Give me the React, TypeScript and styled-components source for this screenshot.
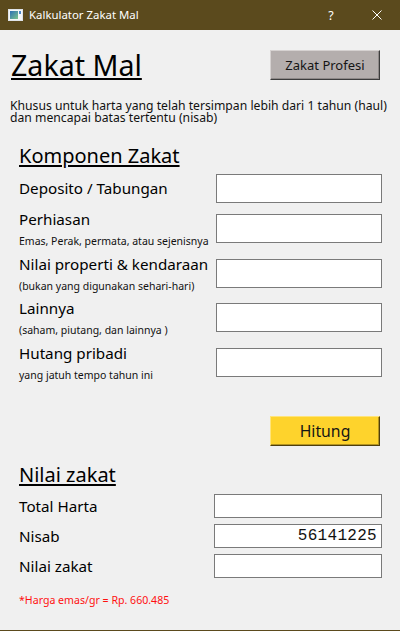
import React from "react";
import styled, { createGlobalStyle } from "styled-components";

const GlobalStyle = createGlobalStyle`
  html, body { margin: 0; padding: 0; background: #f0f0f0; }
  body { font-family: "Noto Sans", "DejaVu Sans", sans-serif; color: #111; }
  * { box-sizing: border-box; }
`;

const Window = styled.div`
  width: 400px;
  height: 631px;
  display: flex;
  flex-direction: column;
  background: #f0f0f0;
  border-bottom: 1px solid #5b4a1d;
`;

const TitleBar = styled.div`
  height: 30px;
  flex: none;
  display: flex;
  align-items: center;
  background: #5b4a1d;
  color: #fff;
  padding-left: 8px;
`;

const TitleText = styled.span`
  font-size: 11.4px;
  margin-left: 6px;
  line-height: 30px;
`;

const CaptionButtons = styled.div`
  margin-left: auto;
  display: flex;
  height: 100%;
`;

const CaptionButton = styled.div`
  width: 46px;
  height: 30px;
  display: flex;
  align-items: center;
  justify-content: center;
  font-size: 12.5px;
  color: #fff;
`;

const Main = styled.div`
  flex: 1;
  display: flex;
  flex-direction: column;
  padding: 0 10px;
`;

const Header = styled.div`
  display: flex;
  justify-content: space-between;
  align-items: flex-start;
  margin-top: 20px;
  padding-right: 10px;
`;

const PageTitle = styled.h1`
  margin: 0 0 0 1px;
  font-weight: normal;
  font-size: 28.6px;
  line-height: 30px;
  text-decoration: underline;
  text-decoration-thickness: 2px;
  text-underline-offset: 2px;
  color: #000;
`;

const Button = styled.button<{ $tone: "gray" | "yellow"; $size: number }>`
  width: 110px;
  height: 30px;
  padding: 0;
  font-family: "Noto Sans", sans-serif;
  font-size: ${(p) => p.$size}px;
  color: #151515;
  cursor: pointer;
  background: ${(p) => (p.$tone === "gray" ? "#b4aead" : "#fed32c")};
  border: 1px solid;
  border-color: ${(p) =>
    p.$tone === "gray"
      ? "#d6d2d1 #3c3c3c #3c3c3c #d6d2d1"
      : "#ffe47a #4e3f0e #4e3f0e #ffe47a"};
  box-shadow: ${(p) =>
    p.$tone === "gray"
      ? "inset -1px -1px 0 #8e8988"
      : "inset -1px -1px 0 #b39420"};
`;

const Intro = styled.p`
  margin: 19.5px 0 0 0;
  font-size: 12.2px;
  line-height: 12.5px;
  color: #111;
`;

const Section = styled.section`
  display: flex;
  flex-direction: column;
  padding: 0 8px 0 9px;
`;

const SectionTitle = styled.h2<{ $top: number }>`
  margin: ${(p) => p.$top}px 0 0 0;
  font-weight: normal;
  font-size: 20px;
  line-height: 24px;
  text-decoration: underline;
  text-underline-offset: 2px;
  color: #000;
`;

const Rows = styled.div<{ $top: number; $gap: number }>`
  display: flex;
  flex-direction: column;
  gap: ${(p) => p.$gap}px;
  margin-top: ${(p) => p.$top}px;
`;

const Row = styled.div<{ $h?: number; $align: "center" | "flex-start" }>`
  display: flex;
  justify-content: space-between;
  align-items: ${(p) => p.$align};
  height: ${(p) => (p.$h ? `${p.$h}px` : "auto")};
`;

const LabelBlock = styled.div`
  display: flex;
  flex-direction: column;
`;

const Label = styled.span`
  font-size: 15.2px;
  color: #000;
`;

const LabelTop = styled(Label)`
  line-height: 10px;
`;

const SubLabel = styled.span`
  margin-top: 11px;
  font-size: 10.5px;
  line-height: 12px;
  color: #111;
`;

const Field = styled.div<{ $w: number; $h: number }>`
  width: ${(p) => p.$w}px;
  height: ${(p) => p.$h}px;
  flex: none;
  background: #fff;
  border: 1px solid #7a7a7a;
  display: flex;
  align-items: center;
  justify-content: flex-end;
  padding-right: 4px;
  font-family: "Liberation Mono", "Courier New", monospace;
  font-size: 16px;
  letter-spacing: 0.3px;
  color: #111;
`;

const ActionRow = styled.div`
  display: flex;
  justify-content: flex-end;
  margin-top: 23px;
  padding-right: 10px;
`;

const Note = styled.p`
  margin: 16px 0 0 9px;
  font-size: 10.6px;
  line-height: 12px;
  color: #ff1010;
`;

const AppIcon = () => (
  <svg width="15" height="12" viewBox="0 0 15 12">
    <defs>
      <linearGradient id="ig" x1="0" y1="0" x2="1" y2="1">
        <stop offset="0" stopColor="#2c6fb6" />
        <stop offset="1" stopColor="#7cc48a" />
      </linearGradient>
    </defs>
    <rect x="0" y="0" width="15" height="12" fill="#dfe3e8" />
    <rect x="1" y="1" width="13" height="10" fill="#f4f6f8" />
    <rect x="2" y="2" width="8" height="8" fill="url(#ig)" />
    <rect x="11" y="2" width="2" height="3" fill="#4a86c8" />
  </svg>
);

const CloseIcon = () => (
  <svg width="10" height="10" viewBox="0 0 10 10">
    <path d="M0.5 0.5 L9.5 9.5 M9.5 0.5 L0.5 9.5" stroke="#fff" strokeWidth="1" />
  </svg>
);

const components = [
  { label: "Deposito / Tabungan", h: 40 },
  { label: "Perhiasan", sub: "Emas, Perak, permata, atau sejenisnya", h: 45 },
  { label: "Nilai properti & kendaraan", sub: "(bukan yang digunakan sehari-hari)", h: 44 },
  { label: "Lainnya", sub: "(saham, piutang, dan lainnya )", h: 45 },
  { label: "Hutang pribadi", sub: "yang jatuh tempo tahun ini", h: 45 },
];

const results = [
  { label: "Total Harta", value: "" },
  { label: "Nisab", value: "56141225" },
  { label: "Nilai zakat", value: "" },
];

export default function App() {
  return (
    <>
      <GlobalStyle />
      <Window>
        <TitleBar>
          <AppIcon />
          <TitleText>Kalkulator Zakat Mal</TitleText>
          <CaptionButtons>
            <CaptionButton>?</CaptionButton>
            <CaptionButton>
              <CloseIcon />
            </CaptionButton>
          </CaptionButtons>
        </TitleBar>
        <Main>
          <Header>
            <PageTitle>Zakat Mal</PageTitle>
            <Button $tone="gray" $size={13}>
              Zakat Profesi
            </Button>
          </Header>
          <Intro>
            Khusus untuk harta yang telah tersimpan lebih dari 1 tahun (haul)
            <br />
            dan mencapai batas tertentu (nisab)
          </Intro>
          <Section>
            <SectionTitle $top={19}>Komponen Zakat</SectionTitle>
            <Rows $top={6} $gap={0}>
              {components.map((c) =>
                c.sub ? (
                  <Row key={c.label} $h={c.h} $align="flex-start">
                    <LabelBlock>
                      <LabelTop>{c.label}</LabelTop>
                      <SubLabel>{c.sub}</SubLabel>
                    </LabelBlock>
                    <Field $w={166} $h={29} />
                  </Row>
                ) : (
                  <Row key={c.label} $h={c.h} $align="flex-start">
                    <Row $h={29} $align="center">
                      <Label>{c.label}</Label>
                    </Row>
                    <Field $w={166} $h={29} />
                  </Row>
                )
              )}
            </Rows>
          </Section>
          <ActionRow>
            <Button $tone="yellow" $size={15.8}>
              Hitung
            </Button>
          </ActionRow>
          <Section>
            <SectionTitle $top={17}>Nilai zakat</SectionTitle>
            <Rows $top={7} $gap={6}>
              {results.map((r) => (
                <Row key={r.label} $align="center">
                  <Label>{r.label}</Label>
                  <Field $w={168} $h={24}>
                    {r.value}
                  </Field>
                </Row>
              ))}
            </Rows>
          </Section>
          <Note>*Harga emas/gr = Rp. 660.485</Note>
        </Main>
      </Window>
    </>
  );
}
